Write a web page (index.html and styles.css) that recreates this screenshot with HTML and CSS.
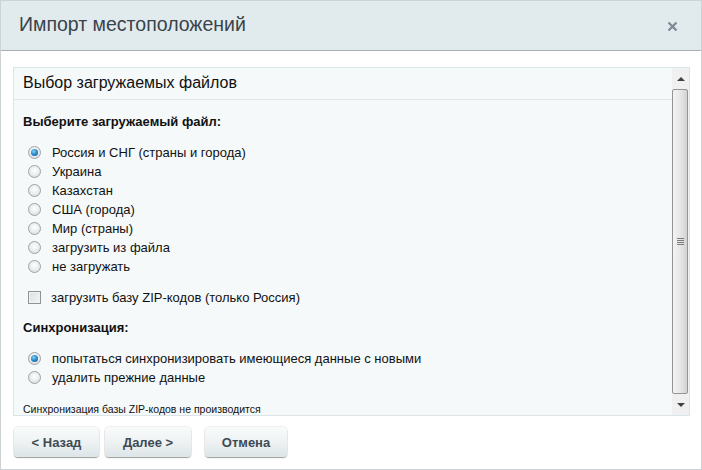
FILE: index.html
```html
<!DOCTYPE html>
<html lang="ru">
<head>
<meta charset="utf-8">
<title>Импорт местоположений</title>
<link rel="stylesheet" href="styles.css">
</head>
<body>
<div class="dialog">
  <div class="dlg-head">
    <span class="dlg-title">Импорт местоположений</span>
    <svg class="dlg-close" width="11" height="11" viewBox="0 0 11 11"><path d="M1.5 1.5 L9.5 9.5 M9.5 1.5 L1.5 9.5" stroke="#7b8896" stroke-width="2.2" stroke-linecap="butt"/></svg>
  </div>
  <div class="dlg-body">
    <div class="panel">
      <div class="panel-main">
        <div class="panel-head">Выбор загружаемых файлов</div>
        <div class="panel-content">
          <div class="label-bold">Выберите загружаемый файл:</div>
          <div class="opts">
            <div class="opt"><span class="radio checked"></span>Россия и СНГ (страны и города)</div>
            <div class="opt"><span class="radio"></span>Украина</div>
            <div class="opt"><span class="radio"></span>Казахстан</div>
            <div class="opt"><span class="radio"></span>США (города)</div>
            <div class="opt"><span class="radio"></span>Мир (страны)</div>
            <div class="opt"><span class="radio"></span>загрузить из файла</div>
            <div class="opt"><span class="radio"></span>не загружать</div>
          </div>
          <div class="opt chk-row"><span class="check"></span>загрузить базу ZIP-кодов (только Россия)</div>
          <div class="label-bold sync">Синхронизация:</div>
          <div class="opts">
            <div class="opt"><span class="radio checked"></span>попытаться синхронизировать имеющиеся данные с новыми</div>
            <div class="opt"><span class="radio"></span>удалить прежние данные</div>
          </div>
          <div class="note">Синхронизация базы ZIP-кодов не производится</div>
        </div>
      </div>
      <div class="scrollbar">
        <div class="sb-btn"><span class="arr up"></span></div>
        <div class="sb-thumb"><span class="grip"></span></div>
        <div class="sb-btn"><span class="arr down"></span></div>
      </div>
    </div>
    <div class="buttons">
      <button class="btn">&lt; Назад</button>
      <button class="btn">Далее &gt;</button>
      <button class="btn cancel">Отмена</button>
    </div>
  </div>
</div>
</body>
</html>
```

FILE: styles.css
```css
* { box-sizing: border-box; }
html, body { margin: 0; padding: 0; background: #ffffff; }
body { font-family: Arial, "Liberation Sans", sans-serif; color: #000; }

.dialog {
  width: 702px;
  height: 470px;
  border: 1px solid #cdd2d5;
  background: #fff;
  display: flex;
  flex-direction: column;
}

.dlg-head {
  height: 50px;
  flex: none;
  background: #e1eaec;
  border-bottom: 1px solid #a9aeb1;
  display: flex;
  align-items: center;
  justify-content: space-between;
  padding: 0 23px 0 18px;
}
.dlg-title {
  font-size: 19.5px;
  color: #38434b;
  padding-bottom: 2px;
}
.dlg-close { display: block; margin-top: 2px; }

.dlg-body {
  padding: 16px 11px 0 12px;
  display: flex;
  flex-direction: column;
}

.panel {
  height: 349px;
  border: 1px solid #dbe4e8;
  background: #f5f9fa;
  display: flex;
  overflow: hidden;
}
.panel-main { flex: 1; min-width: 0; display: flex; flex-direction: column; }
.panel-head {
  height: 32px;
  border-bottom: 1px solid #dde6ea;
  font-size: 16px;
  color: #101010;
  padding: 6px 0 0 9px;
}
.panel-content {
  padding: 12px 0 0 9px;
  font-size: 13px;
}
.label-bold {
  font-weight: bold;
  font-size: 13px;
  line-height: 19px;
  color: #111;
}
.opts { margin-top: 12px; }
.opt {
  display: flex;
  align-items: center;
  line-height: 19px;
  height: 19px;
  color: #111;
}
.radio {
  width: 13px;
  height: 13px;
  border-radius: 50%;
  border: 1px solid #9fa3a6;
  background: radial-gradient(circle at 50% 40%, #ffffff 0%, #e9ebec 55%, #d0d4d6 100%);
  margin: 0 11px 0 5px;
  position: relative;
  flex: none;
}
.radio.checked::after {
  content: "";
  position: absolute;
  left: 2px; top: 2px;
  width: 7px; height: 7px;
  border-radius: 50%;
  background: radial-gradient(circle at 40% 35%, #8fd0f5 0%, #2a8fd0 45%, #0d4f85 100%);
}
.chk-row { margin-top: 12px; }
.check {
  width: 13px;
  height: 13px;
  border: 1px solid #8f9496;
  background: linear-gradient(135deg, #dcdfe0 0%, #f4f5f5 100%);
  box-shadow: inset 0 0 0 1px #f0f1f1;
  margin: 0 10px 0 5px;
  flex: none;
}
.sync { margin-top: 11px; }
.note {
  margin-top: 16px;
  font-size: 10.5px;
  line-height: 12px;
  color: #111;
}

.scrollbar {
  width: 17px;
  flex: none;
  background: #f0f0f0;
  display: flex;
  flex-direction: column;
}
.sb-btn {
  height: 21px;
  flex: none;
  display: flex;
  align-items: center;
  justify-content: center;
  background: #f0f0f0;
}
.arr { width: 0; height: 0; border-left: 4px solid transparent; border-right: 4px solid transparent; }
.arr.up { border-bottom: 4px solid #404040; }
.arr.down { border-top: 4px solid #404040; }
.sb-thumb {
  flex: 1;
  margin: 0 1px 0 0;
  border: 1px solid #959595;
  border-radius: 2px;
  background: linear-gradient(90deg, #f3f3f3 0%, #e8e8e8 50%, #d2d2d2 100%);
  display: flex;
  align-items: center;
  justify-content: center;
}
.grip {
  width: 7px;
  height: 7px;
  background: repeating-linear-gradient(180deg, #7a7a7a 0, #7a7a7a 1px, transparent 1px, transparent 2px);
}

.buttons {
  display: flex;
  margin-top: 11px;
  padding-left: 1px;
}
.btn {
  height: 30px;
  border: none;
  border-radius: 4px;
  background: linear-gradient(180deg, #f9fbfb 0%, #eef2f3 50%, #dde5e8 100%);
  box-shadow: 0 1px 1px rgba(0,0,0,0.35), 0 0 0 1px rgba(0,0,0,0.06);
  font-family: Arial, "Liberation Sans", sans-serif;
  font-weight: bold;
  font-size: 13px;
  color: #3e4a53;
  padding: 0 16px;
  margin-right: 6px;
  width: 85px;
}
.btn:nth-child(2) { width: 86px; margin-right: 14px; }
.btn.cancel { width: 82px; }
```
